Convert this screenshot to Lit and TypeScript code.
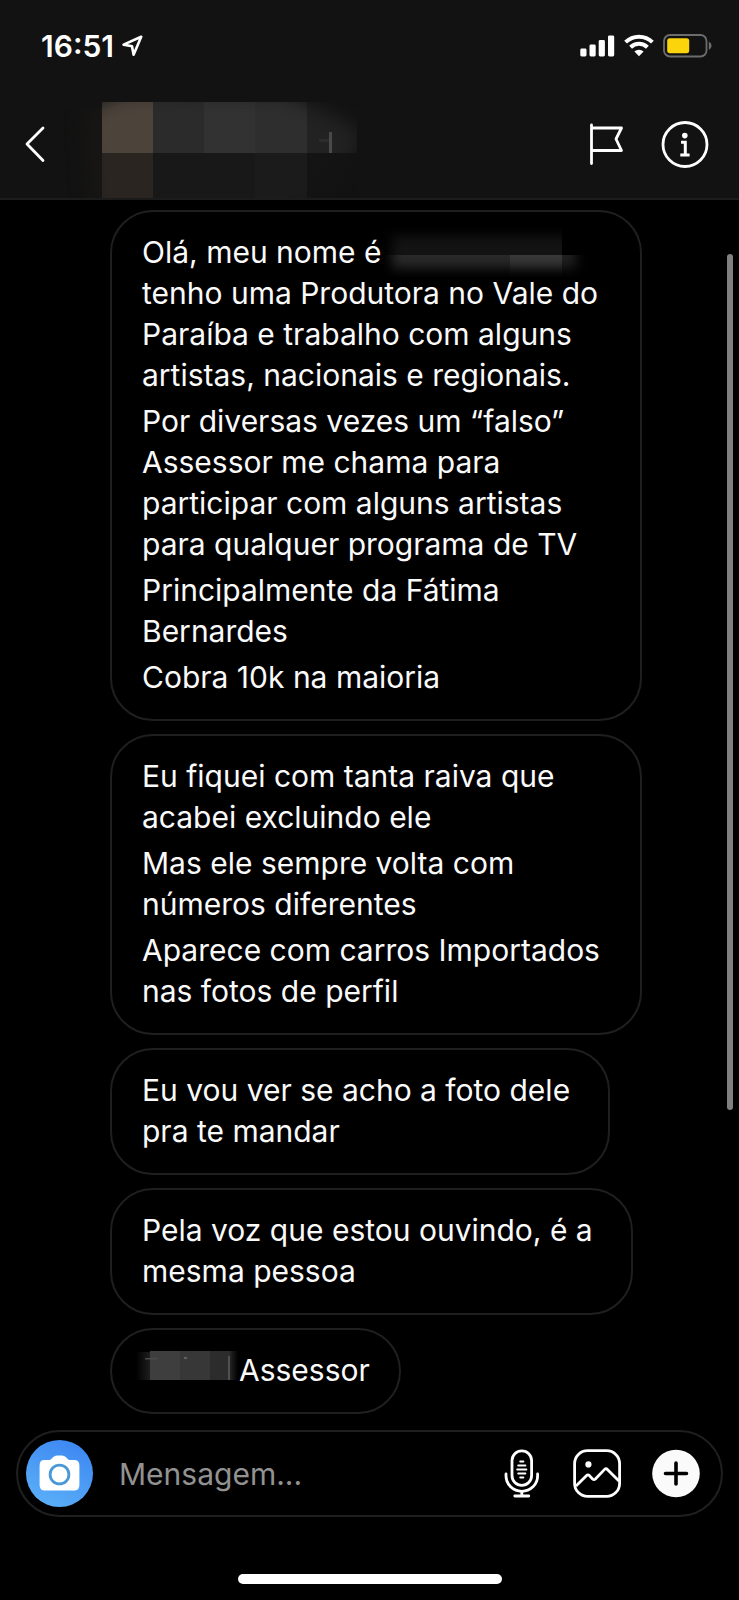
import { LitElement, html, css, nothing } from "lit";
import { customElement, property } from "lit/decorators.js";

interface Message {
  paragraphs: string[][];
  mask?: "after-first-line" | "before-first-line";
}

const MESSAGES: Message[] = [
  {
    mask: "after-first-line",
    paragraphs: [
      ["Olá, meu nome é", "tenho uma Produtora no Vale do", "Paraíba e trabalho com alguns", "artistas, nacionais e regionais."],
      ["Por diversas vezes um “falso”", "Assessor me chama para", "participar com alguns artistas", "para qualquer programa de TV"],
      ["Principalmente da Fátima", "Bernardes"],
      ["Cobra 10k na maioria"],
    ],
  },
  {
    paragraphs: [
      ["Eu fiquei com tanta raiva que", "acabei excluindo ele"],
      ["Mas ele sempre volta com", "números diferentes"],
      ["Aparece com carros Importados", "nas fotos de perfil"],
    ],
  },
  { paragraphs: [["Eu vou ver se acho a foto dele", "pra te mandar"]] },
  { paragraphs: [["Pela voz que estou ouvindo, é a", "mesma pessoa"]] },
  { mask: "before-first-line", paragraphs: [["Assessor"]] },
];

@customElement("status-bar")
export class StatusBar extends LitElement {
  static styles = css`
    :host {
      display: flex;
      align-items: center;
      height: 91px;
      padding: 0 27px 0 41px;
      box-sizing: border-box;
    }
    .time {
      font-size: 30px;
      font-weight: 600;
      line-height: 36px;
    }
    .arrow {
      margin-left: 8px;
    }
    .signal {
      margin-left: auto;
    }
    .wifi {
      margin: 0 9px;
    }
    svg {
      display: block;
    }
  `;
  render() {
    return html`
      <time class="time">16:51</time>
      <svg class="arrow" width="21" height="22" viewBox="0 0 21 22" fill="none" stroke="#fff" stroke-width="2.6" stroke-linejoin="round" aria-hidden="true">
        <path d="M19.2 1.8 L1.6 9.6 L10 11.2 L11.6 19.8 Z" />
      </svg>
      <svg class="signal" width="35" height="22" viewBox="0 0 35 22" fill="#fff" aria-hidden="true">
        <rect x="0.3" y="13.5" width="6.2" height="8" rx="1.4" />
        <rect x="9.5" y="9.5" width="6.2" height="12" rx="1.4" />
        <rect x="18.7" y="5" width="6.2" height="16.5" rx="1.4" />
        <rect x="28" y="0.5" width="6.2" height="21" rx="1.4" />
      </svg>
      <svg class="wifi" width="30" height="23" viewBox="0 0 30 23" fill="none" stroke="#fff" stroke-width="4" aria-hidden="true">
        <path d="M1.6 8.2 A19 19 0 0 1 28.4 8.2" />
        <path d="M6.6 13.2 A12 12 0 0 1 23.4 13.2" />
        <path d="M15 22.2 L10.4 17.6 A6.5 6.5 0 0 1 19.6 17.6 Z" fill="#fff" stroke="none" />
      </svg>
      <svg width="49" height="24" viewBox="0 0 49 24" aria-hidden="true">
        <rect x="1" y="1" width="42.5" height="21.5" rx="6" fill="none" stroke="#6c6c6c" stroke-width="1.8" />
        <rect x="4.2" y="4.2" width="22" height="15" rx="2.6" fill="#fbd40b" />
        <path d="M45.8 7.6 Q48.6 9.2 48.6 11.8 Q48.6 14.4 45.8 16 Z" fill="#6c6c6c" />
      </svg>
    `;
  }
}

@customElement("chat-header")
export class ChatHeader extends LitElement {
  static styles = css`
    :host {
      display: flex;
      align-items: center;
      height: 107px;
      padding: 0 30px 0 19px;
      box-sizing: border-box;
    }
    button {
      display: block;
      padding: 0;
      border: 0;
      background: none;
      cursor: pointer;
    }
    svg {
      display: block;
    }
    .person {
      flex: 1;
      min-width: 0;
      align-self: stretch;
      margin-left: 11px;
      overflow: hidden;
    }
    .flag {
      margin-right: 37px;
    }
  `;
  render() {
    return html`
      <button aria-label="Voltar">
        <svg width="30" height="40" viewBox="0 0 30 40" fill="none" stroke="#fff" stroke-width="2.8" stroke-linecap="round" stroke-linejoin="round">
          <path d="M24 3 L8 19 L24 35.5" />
        </svg>
      </button>
      <div class="person">
        <svg width="300" height="107" viewBox="60 91 300 107" aria-hidden="true">
          <defs>
            <filter id="soft" x="-20%" y="-20%" width="140%" height="140%"><feGaussianBlur stdDeviation="9" /></filter>
            <mask id="fade" maskUnits="userSpaceOnUse" x="60" y="91" width="300" height="110">
              <path d="M84 118 Q100 92 150 92 L282 94 Q335 112 362 134 Q352 172 300 215 L90 215 Z" fill="#fff" filter="url(#soft)" />
            </mask>
          </defs>
          <g mask="url(#fade)">
            <rect x="60" y="108" width="42" height="90" fill="#171614" />
            <rect x="102" y="102" width="51" height="51" fill="#4c433b" />
            <rect x="153" y="102" width="51" height="51" fill="#2b2b2b" />
            <rect x="204" y="102" width="51" height="51" fill="#323232" />
            <rect x="255" y="102" width="52" height="51" fill="#2e2e2e" />
            <rect x="307" y="102" width="50" height="51" fill="#222" />
            <rect x="102" y="153" width="51" height="48" fill="#2a2520" />
            <rect x="153" y="153" width="102" height="48" fill="#181818" />
            <rect x="255" y="153" width="52" height="48" fill="#1b1b1b" />
            <rect x="307" y="153" width="50" height="48" fill="#141414" />
            <rect x="329" y="132" width="3" height="21" fill="#4a4a4a" />
            <rect x="319" y="139" width="10" height="3" fill="#2c2c2c" />
          </g>
        </svg>
      </div>
      <button class="flag" aria-label="Sinalizar">
        <svg width="35" height="44" viewBox="0 0 35 44" fill="none" stroke="#fff" stroke-width="2.8" stroke-linecap="round" stroke-linejoin="round">
          <path d="M2.5 2 V40.5 M2.5 5 H32.5 L27 16 L32.5 27.5 H2.5" />
        </svg>
      </button>
      <button aria-label="Informações">
        <svg width="48" height="48" viewBox="0 0 48 48" fill="none" stroke="#fff">
          <circle cx="24" cy="23.5" r="22" stroke-width="2.8" />
          <circle cx="23.8" cy="14.6" r="2.8" fill="#fff" stroke="none" />
          <path d="M20 21.2 H24.3 V34 M19.3 34 H28.6" stroke-width="3" />
        </svg>
      </button>
    `;
  }
}

@customElement("chat-bubble")
export class ChatBubble extends LitElement {
  @property({ attribute: false }) message!: Message;

  static styles = css`
    :host {
      display: block;
      max-width: 100%;
      box-sizing: border-box;
      border: 2px solid #1f1f1f;
      border-radius: 43px;
      padding: 20px 29px 21px 30px;
    }
    :host([multiline]) {
      padding-right: 38px;
    }
    :host([long]) {
      width: 532px;
    }
    .text {
      margin: 0 0 5px;
      font-size: 30px;
      line-height: 41px;
      color: #fafafa;
    }
    .text:last-child {
      margin-bottom: 0;
    }
    .mask {
      display: inline-block;
      vertical-align: top;
      overflow: visible;
    }
    .mask-before {
      margin-right: 2px;
    }
  `;

  private maskAfter() {
    return html`<svg class="mask" width="190" height="41" viewBox="0 0 190 41" aria-hidden="true">
      <defs>
        <filter id="m1" x="-20%" y="-40%" width="140%" height="180%"><feGaussianBlur stdDeviation="6" /></filter>
        <mask id="f1" maskUnits="userSpaceOnUse" x="-10" y="-10" width="220" height="65">
          <rect x="10" y="4" width="184" height="32" fill="#fff" filter="url(#m1)" />
        </mask>
      </defs>
      <g mask="url(#f1)">
        <rect x="0" y="-5" width="180" height="28" fill="#131313" />
        <rect x="2" y="23" width="126" height="22" fill="#292929" />
        <rect x="128" y="23" width="52" height="22" fill="#383838" />
        <rect x="180" y="23" width="26" height="22" fill="#202020" />
      </g>
    </svg>`;
  }

  private maskBefore() {
    return html`<svg class="mask mask-before" width="95" height="41" viewBox="0 0 95 41" aria-hidden="true">
      <defs>
        <linearGradient id="g1"><stop offset="0" stop-color="#000" /><stop offset="1" stop-color="#1e1e1e" /></linearGradient>
        <linearGradient id="g2"><stop offset="0" stop-color="#242424" /><stop offset="1" stop-color="#000" /></linearGradient>
      </defs>
      <rect x="-6" y="2" width="14" height="28" fill="url(#g1)" />
      <rect x="8" y="1" width="30" height="29" fill="#3e3e3e" />
      <rect x="38" y="1" width="30" height="29" fill="#373737" />
      <rect x="68" y="1" width="20" height="29" fill="#2c2c2c" />
      <rect x="88" y="1" width="8" height="29" fill="url(#g2)" />
      <rect x="86" y="6" width="2" height="24" fill="#505050" />
      <rect x="3" y="8" width="12" height="1.5" fill="#4a4a4a" />
      <rect x="42" y="7" width="3" height="2" fill="#606060" />
    </svg>`;
  }

  render() {
    const { paragraphs, mask } = this.message;
    return paragraphs.map(
      (lines, p) => html`<p class="text">${lines.map(
        (line, i) => html`${i ? html`<br />` : nothing}${!p && !i && mask === "before-first-line" ? this.maskBefore() : nothing}${line}${!p && !i && mask === "after-first-line" ? this.maskAfter() : nothing}`
      )}</p>`
    );
  }
}

@customElement("message-composer")
export class MessageComposer extends LitElement {
  static styles = css`
    :host {
      display: flex;
      align-items: center;
      height: 87px;
      margin: 0 16px;
      padding: 0 21px 0 8px;
      box-sizing: border-box;
      border: 2px solid #1f1f1f;
      border-radius: 44px;
    }
    button {
      display: block;
      flex: none;
      padding: 0;
      border: 0;
      background: none;
      cursor: pointer;
    }
    svg {
      display: block;
    }
    .camera {
      display: grid;
      place-items: center;
      width: 67px;
      height: 67px;
      border-radius: 50%;
      background: linear-gradient(25deg, #5db4f8, #3a82f1);
    }
    .field {
      flex: 1;
      min-width: 0;
      height: 60px;
      margin: 0 6px 0 26px;
      padding: 0;
      border: 0;
      outline: 0;
      background: none;
      color: #fafafa;
      font: inherit;
      font-size: 30px;
    }
    .field::placeholder {
      color: #929292;
      opacity: 1;
    }
    .actions {
      display: flex;
      align-items: center;
      gap: 31px;
    }
  `;
  render() {
    return html`
      <button class="camera" aria-label="Câmera">
        <svg width="41" height="38" viewBox="0 1 41 38" aria-hidden="true">
          <path fill="#fff" d="M5.5 6 H10 Q11.5 6 12.5 4.8 L14.3 2.9 Q15.7 1.4 18 1.4 H23 Q25.3 1.4 26.7 2.9 L28.5 4.8 Q29.5 6 31 6 H35 Q40.4 6 40.4 11.4 V31 Q40.4 36.6 35 36.6 H6 Q0.6 36.6 0.6 31 V11.4 Q0.6 6 5.5 6 Z" />
          <circle cx="20.5" cy="20.5" r="9.4" fill="none" stroke="#4a98d8" stroke-width="2.8" />
        </svg>
      </button>
      <input class="field" type="text" placeholder="Mensagem..." aria-label="Mensagem" />
      <div class="actions">
        <button aria-label="Gravar áudio">
          <svg width="38" height="49" viewBox="0 0 38 49" fill="none" stroke="#fff" stroke-width="2.8" stroke-linecap="round" aria-hidden="true">
            <rect x="8" y="1.8" width="19.6" height="34.6" rx="9.8" />
            <path d="M2 25 V27 A15.8 15.3 0 0 0 33.6 27 V25" />
            <path d="M17.8 42.5 V47 M10.8 47 H24.8" />
            <path d="M16.2 12.5 H19.4 M14.2 16.5 H21.4 M13.2 20.5 H22.4 M14.2 24.5 H21.4 M16.2 28.5 H19.4" stroke-width="1.9" />
          </svg>
        </button>
        <button aria-label="Galeria">
          <svg width="48" height="49" viewBox="0 0 48 49" fill="none" stroke="#fff" stroke-width="2.8" stroke-linejoin="round" aria-hidden="true">
            <rect x="1.6" y="1.6" width="45" height="45.8" rx="13" />
            <circle cx="15.4" cy="15.4" r="3.1" fill="#fff" stroke="none" />
            <path d="M3 37 L13.6 26.6 Q15 25.2 16.4 26.6 L19.6 30 Q21 31.3 22.4 30 L31.6 20.4 Q33 19 34.4 20.4 L46 32" />
          </svg>
        </button>
        <button aria-label="Mais">
          <svg width="48" height="49" viewBox="0 0 48 49" aria-hidden="true">
            <circle cx="24" cy="24.5" r="23.8" fill="#fafafa" />
            <path d="M24 14 V35 M13.5 24.5 H34.5" stroke="#000" stroke-width="3.6" stroke-linecap="round" />
          </svg>
        </button>
      </div>
    `;
  }
}

@customElement("app-root")
export class AppRoot extends LitElement {
  static styles = css`
    :host {
      display: flex;
      flex-direction: column;
      min-height: 100vh;
      background: #000;
      color: #fff;
      font-family: Inter, "Liberation Sans", sans-serif;
    }
    .top {
      background: #121212;
      border-bottom: 2px solid #1c1c1c;
    }
    .thread {
      position: relative;
      flex: 1;
      display: flex;
      flex-direction: column;
      align-items: flex-start;
      gap: 13px;
      padding: 10px 16px 16px 110px;
    }
    .scroll {
      position: absolute;
      top: 54px;
      right: 6px;
      bottom: 320px;
      width: 6px;
      border-radius: 3px;
      background: #808080;
    }
    .home {
      width: 264px;
      height: 10px;
      margin: 57px auto 16px;
      border-radius: 5px;
      background: #fff;
    }
  `;
  render() {
    return html`
      <header class="top">
        <status-bar></status-bar>
        <chat-header></chat-header>
      </header>
      <main class="thread">
        ${MESSAGES.map(
          (m) => html`<chat-bubble
            .message=${m}
            ?multiline=${m.paragraphs[0].length > 1}
            ?long=${m.paragraphs.length > 1}
          ></chat-bubble>`
        )}
        <div class="scroll"></div>
      </main>
      <message-composer></message-composer>
      <div class="home"></div>
    `;
  }
}
